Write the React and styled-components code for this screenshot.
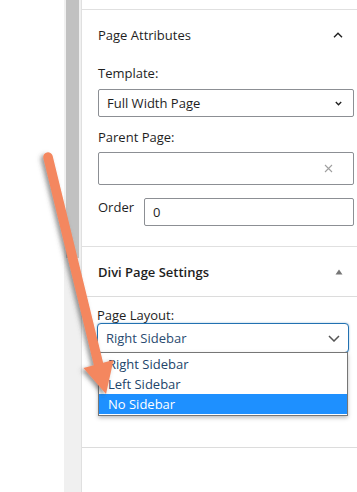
import React from 'react'
import styled, { createGlobalStyle } from 'styled-components'

const GlobalStyle = createGlobalStyle`
	html, body {
		margin: 0;
		padding: 0;
		background: #fff;
	}
	body {
		font-family: "Open Sans", "Noto Sans", sans-serif;
		font-size: 13px;
		color: #1e1e1e;
	}
`

const Screen = styled.div`
	position: relative;
	width: 357px;
	height: 492px;
	display: flex;
	overflow: hidden;
	background: #fff;
`

const Canvas = styled.div`
	width: 64px;
	flex-shrink: 0;
	background: #fff;
`

const ScrollTrack = styled.div`
	width: 17px;
	flex-shrink: 0;
	background: #f0f0f0;
	padding: 0 2px;
	box-sizing: border-box;
`

const ScrollThumb = styled.div`
	height: 258px;
	background: #c1c1c1;
`

const Sidebar = styled.div`
	flex: 1;
	border-left: 1px solid #e0e0e0;
	padding-top: 9px;
	display: flex;
	flex-direction: column;
`

const Panel = styled.section`
	border-top: 1px solid #e0e0e0;
	${p => p.$last && 'border-bottom: 1px solid #dcdcdc;'}
`

const PanelHead = styled.div`
	height: ${p => p.$h}px;
	padding: 0 14px 0 16px;
	display: flex;
	align-items: center;
	justify-content: space-between;
	font-weight: ${p => (p.$bold ? 600 : 400)};
	color: #1e1e1e;
	${p => p.$divided && 'border-bottom: 1px solid #dcdcdc;'}
`

const PanelBody = styled.div`
	padding: ${p => p.$pad};
`

const Label = styled.div`
	line-height: ${p => p.$lh || 18}px;
	color: #1e1e1e;
	margin-top: ${p => p.$mt || 0}px;
`

const Field = styled.div`
	position: relative;
	box-sizing: border-box;
	width: ${p => p.$w}px;
	height: ${p => p.$h}px;
	margin-top: ${p => p.$mt || 0}px;
	border: 1px solid ${p => (p.$focus ? '#2271b1' : '#8c8f94')};
	border-radius: ${p => (p.$focus ? 4 : 2)}px;
	padding: 0 ${p => p.$pr || 12}px 0 8px;
	display: flex;
	align-items: center;
	justify-content: space-between;
	color: ${p => (p.$focus ? '#2a4a70' : '#1e1e1e')};
	background: #fff;
	${p => p.$focus && 'box-shadow: 0 0 2px rgba(34, 113, 177, 0.5);'}
`

const OrderRow = styled.div`
	display: flex;
	align-items: flex-start;
	margin-top: 13px;
`

const OrderLabel = styled.div`
	width: 46px;
	line-height: 18px;
`

const Menu = styled.ul`
	position: absolute;
	top: 100%;
	left: 0;
	right: 0;
	margin: 0;
	padding: 1px 0;
	list-style: none;
	background: #fff;
	border: 1px solid #767676;
	box-shadow: 0 2px 4px rgba(0, 0, 0, 0.25);
`

const Option = styled.li`
	height: 20px;
	line-height: 20px;
	padding-left: 9px;
	color: ${p => (p.$active ? '#fff' : '#22446a')};
	background: ${p => (p.$active ? '#1e90ff' : 'transparent')};
`

const Overlay = styled.svg`
	position: absolute;
	left: 0;
	top: 0;
	pointer-events: none;
`

const ChevronUp = () => (
	<svg width="10" height="6" viewBox="0 0 10 6">
		<path d="M1 5.3 L5 1.3 L9 5.3" fill="none" stroke="#1e1e1e" strokeWidth="1.4" />
	</svg>
)

const SmallChevron = () => (
	<svg width="7" height="5" viewBox="0 0 7 5">
		<path d="M0.8 1 L3.5 3.8 L6.2 1" fill="none" stroke="#1e1e1e" strokeWidth="1.3" />
	</svg>
)

const Clear = () => (
	<svg width="9" height="9" viewBox="0 0 9 9">
		<path d="M1 1 L8 8 M8 1 L1 8" stroke="#a0a0a0" strokeWidth="1.1" />
	</svg>
)

const Triangle = () => (
	<svg width="8" height="6" viewBox="0 0 8 6">
		<path d="M4 0.5 L7.5 5.5 L0.5 5.5 Z" fill="#767676" />
	</svg>
)

const WideChevron = () => (
	<svg width="12" height="7" viewBox="0 0 12 7">
		<path d="M1 1 L6 6 L11 1" fill="none" stroke="#555" strokeWidth="1.5" />
	</svg>
)

const Arrow = () => (
	<Overlay width="357" height="492" viewBox="0 0 357 492">
		<defs>
			<filter id="sh" x="-50%" y="-10%" width="200%" height="120%">
				<feDropShadow dx="-2.5" dy="2" stdDeviation="2" floodColor="#444" floodOpacity="0.55" />
			</filter>
		</defs>
		<g filter="url(#sh)" fill="#f4875f">
			<line x1="48" y1="157" x2="99" y2="366" stroke="#f4875f" strokeWidth="9.5" strokeLinecap="round" />
			<polygon points="83.5,368 113.5,360 106,394" />
		</g>
	</Overlay>
)

const layouts = ['Right Sidebar', 'Left Sidebar', 'No Sidebar']

const App = () => (
	<Screen>
		<GlobalStyle />
		<Canvas />
		<ScrollTrack>
			<ScrollThumb />
		</ScrollTrack>
		<Sidebar>
			<Panel>
				<PanelHead $h={50}>
					<span>Page Attributes</span>
					<ChevronUp />
				</PanelHead>
				<PanelBody $pad="4px 0 20px 16px">
					<Label>Template:</Label>
					<Field $w={256} $h={28} $mt={7} $pr={11}>
						<span>Full Width Page</span>
						<SmallChevron />
					</Field>
					<Label $mt={11}>Parent Page:</Label>
					<Field $w={256} $h={33} $mt={6} $pr={20}>
						<span />
						<Clear />
					</Field>
					<OrderRow>
						<OrderLabel>Order</OrderLabel>
						<Field $w={210} $h={28}>
							<span>0</span>
						</Field>
					</OrderRow>
				</PanelBody>
			</Panel>
			<Panel $last>
				<PanelHead $h={49} $bold $divided>
					<span>Divi Page Settings</span>
					<Triangle />
				</PanelHead>
				<PanelBody $pad="10px 0 94px 15px">
					<Label $lh={16}>Page Layout:</Label>
					<Field $w={252} $h={30} $pr={8} $focus>
						<span>Right Sidebar</span>
						<WideChevron />
						<Menu>
							{layouts.map(name => (
								<Option key={name} $active={name === 'No Sidebar'}>{name}</Option>
							))}
						</Menu>
					</Field>
				</PanelBody>
			</Panel>
		</Sidebar>
		<Arrow />
	</Screen>
)

export default App
